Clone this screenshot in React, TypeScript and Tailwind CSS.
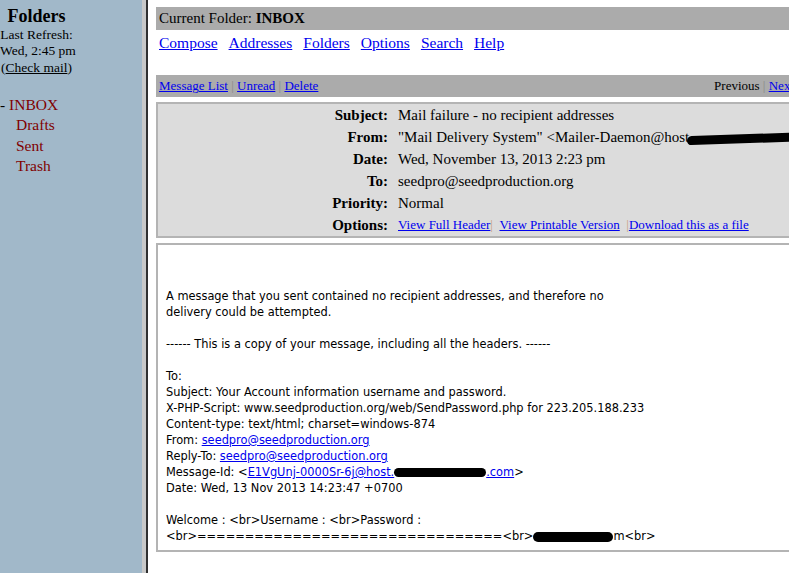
import React from 'react';

const serif = { fontFamily: '"Liberation Serif", "Times New Roman", serif' };

function Blot({ w, className = '' }: { w: string; className?: string }) {
  return <span className={`inline-block h-[9px] bg-black rounded-full align-middle ${w} ${className}`} />;
}

export default function App() {
  const headerRows: [string, React.ReactNode][] = [
    ['Subject:', 'Mail failure - no recipient addresses'],
    [
      'From:',
      <span>
        "Mail Delivery System" &lt;Mailer-Daemon@host.
        <Blot w="w-[130px]" className="-ml-[6px] -skew-y-2" />
      </span>,
    ],
    ['Date:', 'Wed, November 13, 2013 2:23 pm'],
    ['To:', 'seedpro@seedproduction.org'],
    ['Priority:', 'Normal'],
  ];

  return (
    <div className="w-[789px] h-[573px] overflow-hidden flex bg-white" style={serif}>
      {/* Sidebar */}
      <aside className="w-[142px] shrink-0 h-full bg-[#a1b8c9] text-black">
        <div className="w-[73px] text-center pt-[5px] whitespace-nowrap">
          <div className="text-[18px] font-bold leading-[22px]">Folders</div>
          <div className="text-[13.5px] leading-[16px]">Last Refresh:</div>
          <div className="text-[13.5px] leading-[16px]">Wed, 2:45 pm</div>
          <div className="text-[13.5px] leading-[17px]">
            (<span className="underline">Check mail</span>)
          </div>
        </div>
        <div className="mt-[19px] text-[15.5px] leading-[20.3px] text-[#800000]">
          <div>
            <span className="text-black">- </span>INBOX
          </div>
          <div className="pl-[16px]">Drafts</div>
          <div className="pl-[16px]">Sent</div>
          <div className="pl-[16px]">Trash</div>
        </div>
      </aside>
      <div className="w-[4px] shrink-0 h-full bg-[#c8c8c8]" />
      <div className="w-[2px] shrink-0 h-full bg-[#303030]" />

      {/* Main */}
      <main className="shrink-0 w-[646px] pl-[8px] pt-[7px]">
        <div className="bg-[#ababab] h-[23px] flex items-center pl-[3px] text-[15px] text-black">
          Current Folder:&nbsp;<b>INBOX</b>
        </div>
        <nav className="flex gap-[11px] pl-[3px] pt-[3px] text-[15.5px] leading-[20px] text-[#0000ee]">
          {['Compose', 'Addresses', 'Folders', 'Options', 'Search', 'Help'].map((l) => (
            <a key={l} href="#" className="underline">
              {l}
            </a>
          ))}
        </nav>

        <div className="mt-[22px] bg-[#ababab] h-[22px] flex items-center justify-between pl-[3px] text-[13px]">
          <div className="text-[#0000ee]">
            <a href="#" className="underline">Message List</a>
            <span className="text-[#888]"> | </span>
            <a href="#" className="underline">Unread</a>
            <span className="text-[#888]"> | </span>
            <a href="#" className="underline">Delete</a>
          </div>
          <div className="text-black whitespace-nowrap">
            Previous<span className="text-[#888]"> | </span>
            <a href="#" className="underline text-[#0000ee]">Next</a>
          </div>
        </div>

        {/* Header box */}
        <div className="mt-[5px] bg-[#dcdcdc] border-2 border-[#b4b4b4] overflow-hidden">
          <div className="grid grid-cols-[230px_1fr] gap-x-[10px] text-[15px] leading-[22px] text-black">
            {headerRows.map(([k, v]) => (
              <React.Fragment key={k}>
                <div className="text-right font-bold">{k}</div>
                <div className="whitespace-nowrap">{v}</div>
              </React.Fragment>
            ))}
            <div className="text-right font-bold">Options:</div>
            <div className="text-[13px] text-[#0000ee] whitespace-nowrap">
              <a href="#" className="underline">View Full Header</a>
              <span className="text-[#c8a080]">|</span>
              &nbsp;&nbsp;
              <a href="#" className="underline">View Printable Version</a>
              &nbsp;&nbsp;<span className="text-[#c8a080]">|</span>
              <a href="#" className="underline">Download this as a file</a>
            </div>
          </div>
        </div>

        {/* Body */}
        <div
          className="mt-[5px] border-2 border-[#b4b4b4] h-[309px] pl-[8px] pt-[43px] text-[11.4px] leading-[16px] text-black whitespace-nowrap"
          style={{ fontFamily: 'Tahoma, "DejaVu Sans", "Liberation Sans", sans-serif' }}
        >
          <div>A message that you sent contained no recipient addresses, and therefore no</div>
          <div>delivery could be attempted.</div>
          <div className="h-[16px]" />
          <div>------ This is a copy of your message, including all the headers. ------</div>
          <div className="h-[16px]" />
          <div>To:</div>
          <div>Subject: Your Account information username and password.</div>
          <div>X-PHP-Script: www.seedproduction.org/web/SendPassword.php for 223.205.188.233</div>
          <div>Content-type: text/html; charset=windows-874</div>
          <div>
            From: <a href="#" className="underline text-[#0000ee]">seedpro@seedproduction.org</a>
          </div>
          <div>
            Reply-To: <a href="#" className="underline text-[#0000ee]">seedpro@seedproduction.org</a>
          </div>
          <div>
            Message-Id: &lt;
            <a href="#" className="underline text-[#0000ee]">
              E1VgUnj-0000Sr-6j@host.
              <Blot w="w-[92px]" className="h-[7px]" />
              .com
            </a>
            &gt;
          </div>
          <div>Date: Wed, 13 Nov 2013 14:23:47 +0700</div>
          <div className="h-[16px]" />
          <div>Welcome : &lt;br&gt;Username : &lt;br&gt;Password :</div>
          <div>
            &lt;br&gt;================================&lt;br&gt;
            <Blot w="w-[80px]" className="h-[10px]" />m&lt;br&gt;
          </div>
        </div>
      </main>
    </div>
  );
}
